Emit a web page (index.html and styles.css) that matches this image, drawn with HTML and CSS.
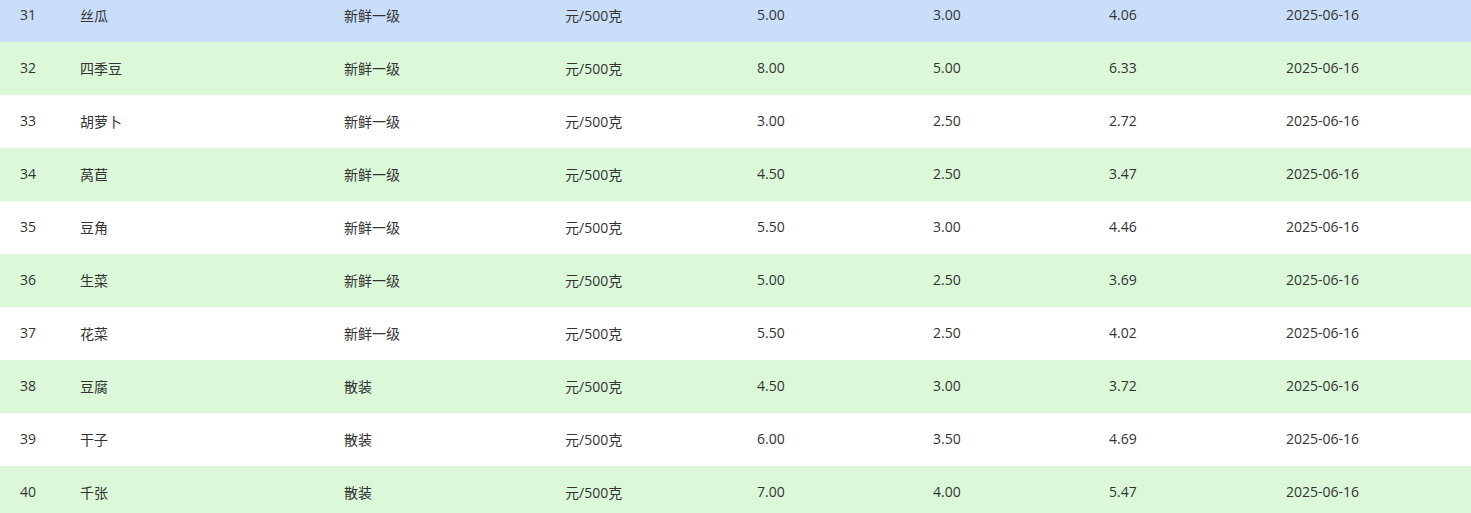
FILE: index.html
```html
<!DOCTYPE html>
<html lang="zh-CN">
<head>
<meta charset="utf-8">
<title>蔬菜价格</title>
<link rel="stylesheet" href="styles.css">
</head>
<body>
<div class="scroller">
<table class="price-table">
<colgroup>
<col class="c-no"><col class="c-name"><col class="c-spec"><col class="c-unit"><col class="c-max"><col class="c-min"><col class="c-avg"><col class="c-date">
</colgroup>
<tbody>
<tr class="row current"><td>31</td><td>丝瓜</td><td>新鲜一级</td><td>元/500克</td><td>5.00</td><td>3.00</td><td>4.06</td><td>2025-06-16</td></tr>
<tr class="row even"><td>32</td><td>四季豆</td><td>新鲜一级</td><td>元/500克</td><td>8.00</td><td>5.00</td><td>6.33</td><td>2025-06-16</td></tr>
<tr class="row"><td>33</td><td>胡萝卜</td><td>新鲜一级</td><td>元/500克</td><td>3.00</td><td>2.50</td><td>2.72</td><td>2025-06-16</td></tr>
<tr class="row even"><td>34</td><td>莴苣</td><td>新鲜一级</td><td>元/500克</td><td>4.50</td><td>2.50</td><td>3.47</td><td>2025-06-16</td></tr>
<tr class="row"><td>35</td><td>豆角</td><td>新鲜一级</td><td>元/500克</td><td>5.50</td><td>3.00</td><td>4.46</td><td>2025-06-16</td></tr>
<tr class="row even"><td>36</td><td>生菜</td><td>新鲜一级</td><td>元/500克</td><td>5.00</td><td>2.50</td><td>3.69</td><td>2025-06-16</td></tr>
<tr class="row"><td>37</td><td>花菜</td><td>新鲜一级</td><td>元/500克</td><td>5.50</td><td>2.50</td><td>4.02</td><td>2025-06-16</td></tr>
<tr class="row even"><td>38</td><td>豆腐</td><td>散装</td><td>元/500克</td><td>4.50</td><td>3.00</td><td>3.72</td><td>2025-06-16</td></tr>
<tr class="row"><td>39</td><td>干子</td><td>散装</td><td>元/500克</td><td>6.00</td><td>3.50</td><td>4.69</td><td>2025-06-16</td></tr>
<tr class="row even"><td>40</td><td>千张</td><td>散装</td><td>元/500克</td><td>7.00</td><td>4.00</td><td>5.47</td><td>2025-06-16</td></tr>
</tbody>
</table>
</div>
</body>
</html>
```

FILE: styles.css
```css
html, body {
  margin: 0;
  padding: 0;
  background: #ffffff;
  overflow: hidden;
}

.scroller {
  margin-top: -11px;
}

.price-table {
  width: 1471px;
  border-collapse: collapse;
  table-layout: fixed;
  font-family: "Open Sans", "Noto Sans CJK SC", sans-serif;
  font-size: 14px;
  color: #333333;
}

.c-no { width: 60px; }
.c-name { width: 264px; }
.c-spec { width: 221px; }
.c-unit { width: 192px; }
.c-max { width: 176px; }
.c-min { width: 176px; }
.c-avg { width: 177px; }
.c-date { width: 205px; }

.row {
  height: 53px;
  background: #ffffff;
}

.row.even {
  background: #dbf9d9;
}

.row.current {
  background: #c9dff9;
}

.row td {
  padding: 0 0 2px 20px;
  vertical-align: middle;
  white-space: nowrap;
}
```
